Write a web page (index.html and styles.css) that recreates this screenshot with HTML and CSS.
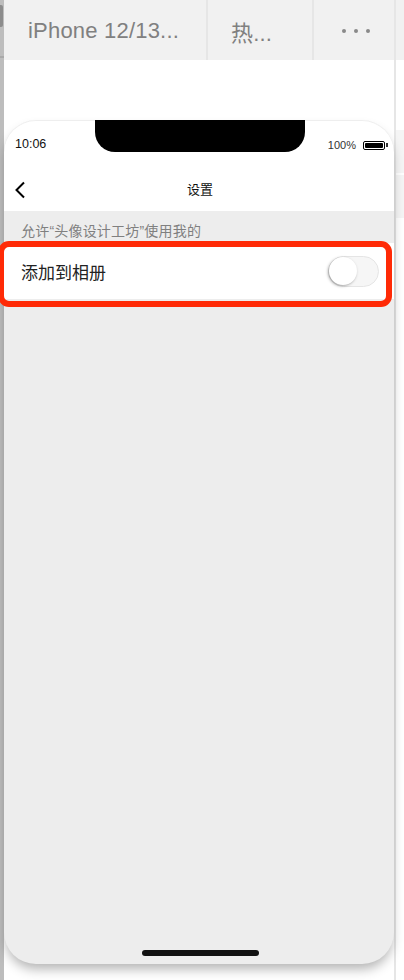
FILE: index.html
```html
<!DOCTYPE html>
<html lang="zh-CN">
<head>
    <meta charset="UTF-8">
    <meta name="viewport" content="width=device-width, initial-scale=1.0">
    <title>设置</title>
    <link rel="stylesheet" href="styles.css">
</head>
<body>

<div class="page">
    <!-- Window edge on the left -->
    <div class="edge">
        <div class="edge-handle"></div>
        <div class="edge-line"></div>
    </div>

    <div class="main">
        <div class="tabs">
            <div class="tab tab-device">iPhone 12/13...</div>
            <div class="tab tab-hot">热...</div>
            <div class="tab tab-more">
                <span class="dot"></span>
                <span class="dot"></span>
                <span class="dot"></span>
            </div>
        </div>

        <div class="stage">
            <div class="phone">
                <div class="notch"></div>
                <div class="status-bar">
                    <span class="time">10:06</span>
                    <div class="status-right">
                        <span class="battery-text">100%</span>
                        <div class="battery"><div class="battery-level"></div></div>
                        <div class="battery-nub"></div>
                    </div>
                </div>
                <div class="nav-bar">
                    <svg class="back" width="12" height="18" viewBox="0 0 12 18">
                        <path d="M10 1.5 L2.5 9 L10 16.5" fill="none" stroke="#000" stroke-width="2"/>
                    </svg>
                    <span class="nav-title">设置</span>
                </div>
                <div class="settings">
                    <p class="hint">允许“头像设计工坊”使用我的</p>
                    <div class="row">
                        <span class="row-label">添加到相册</span>
                        <div class="switch"><div class="knob"></div></div>
                    </div>
                </div>
                <div class="home-bar"></div>
            </div>
        </div>
    </div>

    <!-- Panels of the next window, barely showing -->
    <div class="side">
        <div class="side-tab"></div>
        <div class="side-panel side-panel-first"></div>
        <div class="side-panel"></div>
    </div>

    <!-- Red annotation around the row -->
    <div class="highlight"></div>
</div>

</body>
</html>
```

FILE: styles.css
```css
/* Styles for the page */
html, body {
    margin: 0;
    padding: 0;
    background: #ffffff;
}
.page {
    position: relative;
    display: flex;
    width: 404px;
    height: 980px;
    overflow: hidden;
    font-family: "Liberation Sans", "Noto Sans CJK SC", sans-serif;
}
.edge {
    width: 4px;
    flex-shrink: 0;
    background: #bdbdbd;
    padding-top: 5px;
    box-sizing: border-box;
}
.edge-handle {
    width: 3px;
    height: 22px;
    background: #8c8c8c;
    border-radius: 0 2px 2px 0;
}
.edge-line {
    height: 2px;
    margin-top: 29px;
    background: #a9a9a9;
}
.main {
    position: relative;
    z-index: 1;
    width: 390px;
    flex-shrink: 0;
    border-right: 2px solid #e6e6e6;
}
.tabs {
    display: flex;
    height: 60px;
    background: #f1f1f1;
    color: #808080;
    font-size: 22px;
}
.tab {
    display: flex;
    align-items: center;
    box-sizing: border-box;
    padding-top: 2px;
    border-right: 2px solid #e6e6e6;
    letter-spacing: 0.2px;
}
.tab-device {
    width: 204px;
    padding-left: 24px;
}
.tab-hot {
    width: 106px;
    padding-left: 23px;
}
.tab-more {
    flex: 1;
    gap: 8px;
    padding-left: 28px;
    border-right: none;
}
.dot {
    width: 4px;
    height: 4px;
    border-radius: 50%;
    background: #8a8a8a;
}
.stage {
    padding-top: 60px;
}
.phone {
    position: relative;
    display: flex;
    flex-direction: column;
    width: 390px;
    height: 844px;
    border-radius: 32px;
    overflow: hidden;
    background: #ededed;
    box-shadow: 0 7px 12px -2px rgba(0, 0, 0, 0.3);
}
.notch {
    position: absolute;
    top: 0;
    left: 91px;
    width: 210px;
    height: 32px;
    background: #000000;
    border-radius: 0 0 20px 20px;
}
.status-bar {
    display: flex;
    justify-content: space-between;
    align-items: center;
    height: 46px;
    padding: 0 6px 0 11px;
    background: #ffffff;
    border-radius: 32px 32px 0 0;
    box-shadow: inset 0 1px 0 #eeeeee;
}
.time {
    font-size: 12.5px;
    color: #111111;
    margin-top: 2px;
}
.status-right {
    display: flex;
    align-items: center;
    margin-top: 4px;
}
.battery-text {
    font-size: 11px;
    color: #333333;
    margin-right: 7px;
}
.battery {
    width: 22px;
    height: 9px;
    box-sizing: border-box;
    border: 1px solid #000000;
    border-radius: 2px;
    padding: 1px;
}
.battery-level {
    height: 100%;
    background: #000000;
    border-radius: 1px;
}
.battery-nub {
    width: 2px;
    height: 4px;
    margin-left: 1px;
    background: #333333;
}
.nav-bar {
    position: relative;
    display: flex;
    align-items: center;
    justify-content: center;
    height: 45px;
    background: #ffffff;
}
.back {
    position: absolute;
    left: 10px;
    top: 15px;
}
.nav-title {
    font-size: 13px;
    color: #111111;
    margin: 0 0 0 2px;
}
.settings {
    flex: 1;
}
.hint {
    margin: 0;
    padding: 13px 0 0 17px;
    height: 32px;
    box-sizing: border-box;
    font-size: 14px;
    line-height: 15px;
    letter-spacing: 0.2px;
    color: #808080;
}
.row {
    display: flex;
    align-items: center;
    justify-content: space-between;
    height: 56px;
    padding: 0 15px 0 17px;
    background: #ffffff;
}
.row-label {
    font-size: 17px;
    color: #222222;
}
.switch {
    width: 51px;
    height: 31px;
    box-sizing: border-box;
    border: 1.5px solid #e5e5e5;
    border-radius: 16px;
    background: #f6f6f6;
}
.knob {
    width: 28px;
    height: 28px;
    border-radius: 50%;
    background: #ffffff;
    box-shadow: -1px 1px 3px rgba(0, 0, 0, 0.35);
}
.home-bar {
    width: 117px;
    height: 6px;
    margin: 0 auto 8px;
    background: #111111;
    border-radius: 3px;
    transform: translateX(1px);
}
.side {
    flex: 1;
}
.side-tab {
    height: 60px;
    background: #f1f1f1;
}
.side-panel {
    height: 43px;
    margin-top: 2px;
    background: #f5f5f5;
}
.side-panel-first {
    margin-top: 70px;
}
.highlight {
    position: absolute;
    z-index: 2;
    left: -2px;
    top: 241px;
    width: 394px;
    height: 66px;
    box-sizing: border-box;
    border: 6px solid #ff2a06;
    border-radius: 11px;
}
```
